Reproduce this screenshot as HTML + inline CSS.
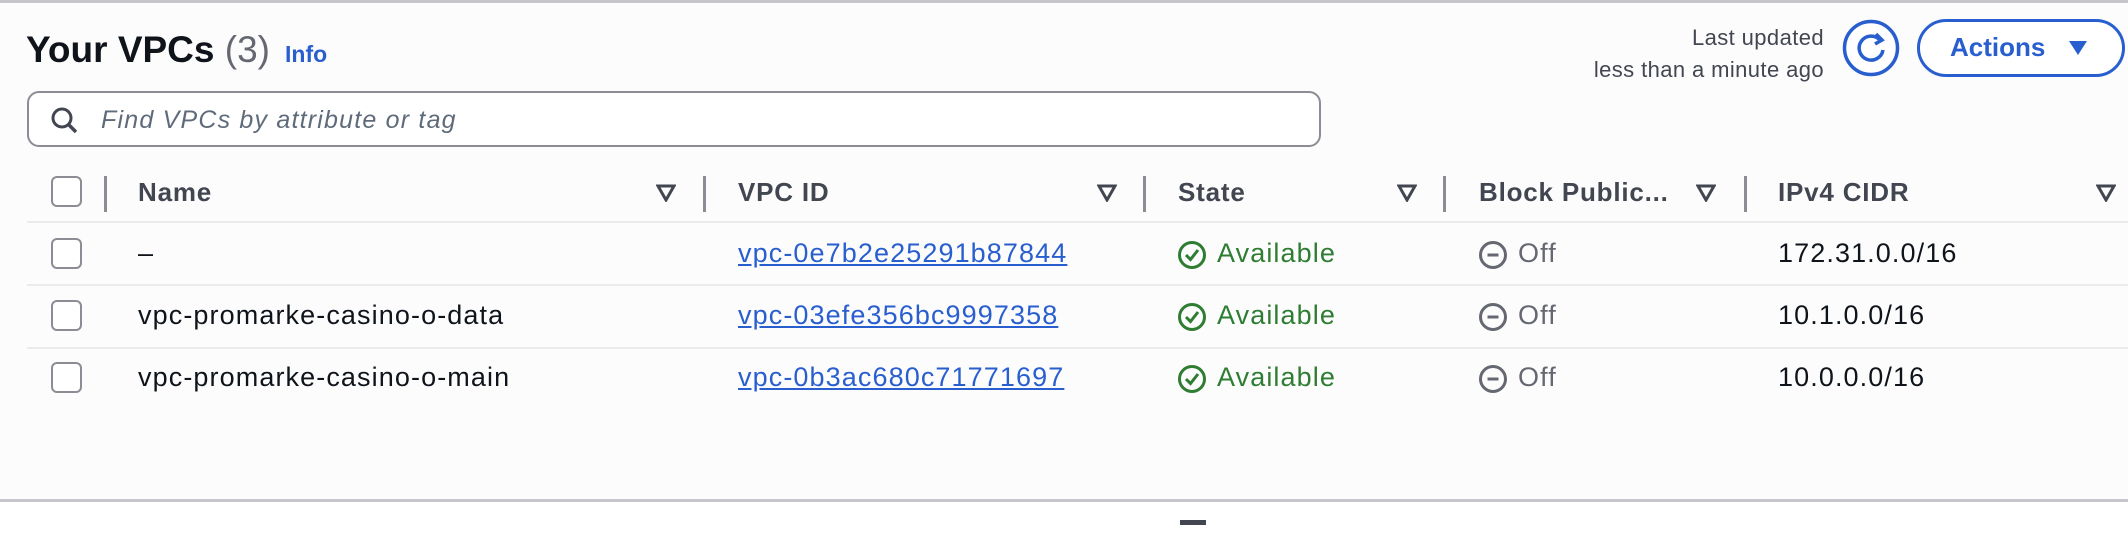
<!DOCTYPE html>
<html><head><meta charset="utf-8"><style>
*{margin:0;padding:0;box-sizing:border-box}
body{width:2128px;height:534px;background:#fff;font-family:"Liberation Sans",sans-serif;position:relative;overflow:hidden;color:#0f141a}
.main{position:absolute;left:0;top:0;width:2128px;height:502px;background:#fcfcfd;border-top:3px solid #c6c6cd;border-bottom:3px solid #c6c6cd}
.a{position:absolute;white-space:nowrap}
.cb{position:absolute;width:31px;height:31px;border:2px solid #8c8c94;border-radius:6px;background:#fff;left:51px}
.hd{font-weight:bold;font-size:26px;color:#424650;top:174px;letter-spacing:0.8px}
.sort{position:absolute;top:181px}
.div{position:absolute;top:173px;width:3px;height:36px;background:#8c8c94}
.sep{position:absolute;left:27px;right:0;height:2px;background:#e9ebed}
.td,.lk,.gr,.gy{font-size:27px;letter-spacing:1.1px}
.td{color:#0f141a}
.lk{color:#295ecf;text-decoration:underline}
.gr{color:#2e7d32}
.gy{color:#656871}
</style></head><body>
<div class="main">
<div class="a" style="left:26px;top:26px;font-size:37px;font-weight:bold;color:#0f141a">Your VPCs <span style="font-weight:normal;color:#656871">(3)</span></div>
<div class="a" style="left:285px;top:38px;font-size:23px;font-weight:bold;color:#295ecf">Info</div>
<div class="a" style="right:304px;top:19px;font-size:22px;color:#424650;text-align:right;line-height:32px;letter-spacing:0.4px">Last updated<br>less than a minute ago</div>
<svg class="a" style="left:1842px;top:16px" width="58" height="58" viewBox="0 0 58 58"><circle cx="29" cy="29" r="26.5" fill="#fff" stroke="#295ecf" stroke-width="3.5"/><path d="M38 21 A12 12 0 1 0 41 31" fill="none" stroke="#295ecf" stroke-width="3.5"/><path d="M34 15 L40 21 L33 25" fill="none" stroke="#295ecf" stroke-width="3.5"/></svg>
<div class="a" style="left:1917px;top:16px;width:208px;height:58px;border:3.5px solid #295ecf;border-radius:29px;background:#fff"></div>
<div class="a" style="left:1950px;top:29px;font-size:26px;font-weight:bold;color:#295ecf">Actions</div>
<svg class="a" style="left:2068px;top:37px" width="20" height="16"><path d="M1 1 L19 1 L10 15Z" fill="#295ecf"/></svg>
<div class="a" style="left:27px;top:88px;width:1294px;height:56px;border:2px solid #8c8c94;border-radius:12px;background:#fff"></div>
<svg class="a" style="left:50px;top:103px" width="30" height="30"><circle cx="12" cy="12" r="9" fill="none" stroke="#424650" stroke-width="3"/><path d="M18.5 18.5 L26 26" stroke="#424650" stroke-width="3.5"/></svg>
<div class="a" style="left:101px;top:103px;font-size:25px;font-style:italic;color:#5f6b7a;letter-spacing:1.2px">Find VPCs by attribute or tag</div>
<div class="cb" style="top:173px"></div>
<div class="div" style="left:104px"></div>
<div class="a hd" style="left:138px">Name</div>
<svg class="sort" style="left:656px" width="20" height="18"><path d="M2 2 L18 2 L10 16Z" fill="none" stroke="#424650" stroke-width="3"/></svg>
<div class="div" style="left:703px"></div>
<div class="a hd" style="left:738px">VPC ID</div>
<svg class="sort" style="left:1097px" width="20" height="18"><path d="M2 2 L18 2 L10 16Z" fill="none" stroke="#424650" stroke-width="3"/></svg>
<div class="div" style="left:1143px"></div>
<div class="a hd" style="left:1178px">State</div>
<svg class="sort" style="left:1397px" width="20" height="18"><path d="M2 2 L18 2 L10 16Z" fill="none" stroke="#424650" stroke-width="3"/></svg>
<div class="div" style="left:1443px"></div>
<div class="a hd" style="left:1479px">Block Public...</div>
<svg class="sort" style="left:1696px" width="20" height="18"><path d="M2 2 L18 2 L10 16Z" fill="none" stroke="#424650" stroke-width="3"/></svg>
<div class="div" style="left:1744px"></div>
<div class="a hd" style="left:1778px">IPv4 CIDR</div>
<svg class="sort" style="left:2096px" width="20" height="18"><path d="M2 2 L18 2 L10 16Z" fill="none" stroke="#424650" stroke-width="3"/></svg>
<div class="sep" style="top:218px"></div>
<div class="sep" style="top:281px"></div>
<div class="sep" style="top:344px"></div>

<div class="cb" style="top:235px"></div>
<div class="a td" style="left:138px;top:235px">–</div>
<div class="a lk" style="left:738px;top:235px">vpc-0e7b2e25291b87844</div>
<svg class="a" style="left:1177px;top:237px" width="30" height="30"><circle cx="15" cy="15" r="12.5" fill="none" stroke="#2e7d32" stroke-width="3"/><path d="M9 15 L13.5 19.5 L21 10" fill="none" stroke="#2e7d32" stroke-width="3"/></svg>
<div class="a gr" style="left:1217px;top:235px">Available</div>
<svg class="a" style="left:1478px;top:237px" width="30" height="30"><circle cx="15" cy="15" r="12.5" fill="none" stroke="#656871" stroke-width="3"/><path d="M9.5 15 L20.5 15" stroke="#656871" stroke-width="3"/></svg>
<div class="a gy" style="left:1518px;top:235px">Off</div>
<div class="a td" style="left:1778px;top:235px">172.31.0.0/16</div>

<div class="cb" style="top:297px"></div>
<div class="a td" style="left:138px;top:297px">vpc-promarke-casino-o-data</div>
<div class="a lk" style="left:738px;top:297px">vpc-03efe356bc9997358</div>
<svg class="a" style="left:1177px;top:299px" width="30" height="30"><circle cx="15" cy="15" r="12.5" fill="none" stroke="#2e7d32" stroke-width="3"/><path d="M9 15 L13.5 19.5 L21 10" fill="none" stroke="#2e7d32" stroke-width="3"/></svg>
<div class="a gr" style="left:1217px;top:297px">Available</div>
<svg class="a" style="left:1478px;top:299px" width="30" height="30"><circle cx="15" cy="15" r="12.5" fill="none" stroke="#656871" stroke-width="3"/><path d="M9.5 15 L20.5 15" stroke="#656871" stroke-width="3"/></svg>
<div class="a gy" style="left:1518px;top:297px">Off</div>
<div class="a td" style="left:1778px;top:297px">10.1.0.0/16</div>

<div class="cb" style="top:359px"></div>
<div class="a td" style="left:138px;top:359px">vpc-promarke-casino-o-main</div>
<div class="a lk" style="left:738px;top:359px">vpc-0b3ac680c71771697</div>
<svg class="a" style="left:1177px;top:361px" width="30" height="30"><circle cx="15" cy="15" r="12.5" fill="none" stroke="#2e7d32" stroke-width="3"/><path d="M9 15 L13.5 19.5 L21 10" fill="none" stroke="#2e7d32" stroke-width="3"/></svg>
<div class="a gr" style="left:1217px;top:359px">Available</div>
<svg class="a" style="left:1478px;top:361px" width="30" height="30"><circle cx="15" cy="15" r="12.5" fill="none" stroke="#656871" stroke-width="3"/><path d="M9.5 15 L20.5 15" stroke="#656871" stroke-width="3"/></svg>
<div class="a gy" style="left:1518px;top:359px">Off</div>
<div class="a td" style="left:1778px;top:359px">10.0.0.0/16</div>
</div>
<div class="a" style="left:1180px;top:520px;width:26px;height:5px;background:#424650"></div>
</body></html>
